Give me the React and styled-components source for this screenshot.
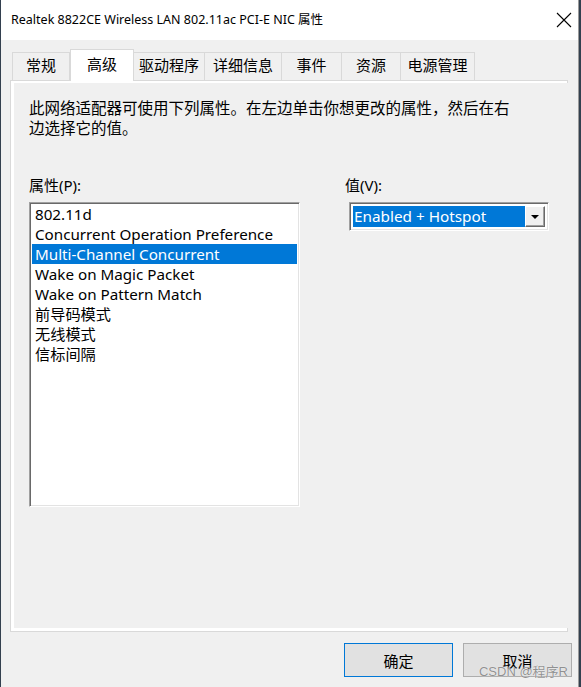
import React from 'react';
import styled, { createGlobalStyle } from 'styled-components';

const GlobalStyle = createGlobalStyle`
  html, body {
    margin: 0;
    padding: 0;
    background: #33404f;
  }
  body {
    font-family: "Noto Sans", "Noto Sans CJK SC", sans-serif;
    color: #000;
  }
`;

const Window = styled.div`
  width: 577px;
  height: 687px;
  margin-left: 1px;
  background: #f0f0f0;
  border-right: 1px solid #9a9a9a;
  display: flex;
  flex-direction: column;
  position: relative;
  overflow: hidden;
`;

const TitleBar = styled.div`
  height: 40px;
  background: #fff;
  display: flex;
  align-items: center;
  justify-content: space-between;
  padding: 0 6px 0 10px;
  box-sizing: border-box;
`;

const Title = styled.div`
  font-size: 12.5px;
  line-height: 16px;
  white-space: nowrap;
  margin-top: -1px;
`;

const CloseIcon = styled.svg`
  width: 16px;
  height: 16px;
`;

const Body = styled.div`
  flex: 1;
  display: flex;
  flex-direction: column;
  padding: 9px 10px 0 9px;
`;

const TabRow = styled.div`
  display: flex;
  align-items: flex-end;
  height: 32px;
  padding-left: 2px;
  position: relative;
  z-index: 1;
  margin-bottom: -1px;
`;

const Tab = styled.div`
  width: ${(p) => p.w}px;
  height: ${(p) => (p.active ? 32 : 29)}px;
  box-sizing: border-box;
  background: ${(p) => (p.active ? '#fff' : '#f0f0f0')};
  border: 1px solid #d9d9d9;
  border-bottom: ${(p) => (p.active ? 'none' : '1px solid #d9d9d9')};
  border-left: ${(p) => (p.first || p.active ? '1px solid #d9d9d9' : 'none')};
  display: flex;
  align-items: center;
  justify-content: center;
  padding-bottom: ${(p) => (p.active ? 4 : 3)}px;
  font-size: 15px;
  line-height: 20px;
  color: #000;
`;

const Panel = styled.div`
  height: 552px;
  box-sizing: border-box;
  border: 1px solid #d9d9d9;
  background: #fff;
  padding: 2px 3px 3px 3px;
  display: flex;
`;

const Page = styled.div`
  flex: 1;
  background: #f0f0f0;
  padding: 15px 16px 0 15px;
  display: flex;
  flex-direction: column;
`;

const Description = styled.p`
  margin: 0;
  font-size: 15.5px;
  line-height: 20px;
  width: 486px;
`;

const Columns = styled.div`
  display: flex;
  margin-top: 37px;
`;

const Column = styled.div`
  display: flex;
  flex-direction: column;
  width: ${(p) => p.w}px;
  margin-left: ${(p) => p.offset || 0}px;
`;

const Label = styled.div`
  font-size: 15px;
  line-height: 20px;
  height: 20px;
  margin-bottom: 7px;
`;

const ListBox = styled.div`
  height: 305px;
  box-sizing: border-box;
  background: #fff;
  border: 1px solid;
  border-color: #a0a0a0 #fff #fff #a0a0a0;
  box-shadow: inset 1px 1px 0 #696969, inset -1px -1px 0 #e3e3e3;
  padding: 1px 2px;
`;

const ListItem = styled.div`
  height: 20px;
  line-height: 20px;
  font-size: 15.2px;
  padding-left: 3px;
  white-space: nowrap;
  background: ${(p) => (p.selected ? '#0078d7' : 'transparent')};
  color: ${(p) => (p.selected ? '#fff' : '#000')};
`;

const Combo = styled.div`
  margin-left: 4px;
  width: 200px;
  height: 29px;
  box-sizing: border-box;
  border: 1px solid;
  border-color: #a0a0a0 #fff #fff #a0a0a0;
  box-shadow: inset 1px 1px 0 #696969, inset -1px -1px 0 #e3e3e3;
  background: #fff;
  padding: 3px 3px 3px 3px;
  display: flex;
`;

const ComboValue = styled.div`
  flex: 1;
  background: #0078d7;
  color: #fff;
  font-size: 15.3px;
  line-height: 21px;
  padding-left: 1px;
  white-space: nowrap;
`;

const ComboButton = styled.div`
  width: 20px;
  box-sizing: border-box;
  background: #f0f0f0;
  border: 1px solid;
  border-color: #fff #696969 #696969 #fff;
  box-shadow: inset -1px -1px 0 #a0a0a0;
  display: flex;
  align-items: center;
  justify-content: center;
`;

const Arrow = styled.div`
  width: 0;
  height: 0;
  border-left: 4px solid transparent;
  border-right: 4px solid transparent;
  border-top: 4px solid #000;
  margin-top: 1px;
`;

const ButtonRow = styled.div`
  display: flex;
  justify-content: flex-end;
  gap: 10px;
  margin-top: 11px;
  margin-right: -4px;
`;

const Button = styled.button`
  width: 109px;
  height: 34px;
  box-sizing: border-box;
  background: #e1e1e1;
  border: 1px solid ${(p) => (p.primary ? '#0078d7' : '#adadad')};
  font-family: "Noto Sans", "Noto Sans CJK SC", sans-serif;
  font-size: 15px;
  color: #000;
  padding: 0;
`;

const Watermark = styled.div`
  position: absolute;
  right: 10px;
  bottom: 7px;
  font-family: "Liberation Sans", "Noto Sans CJK SC", sans-serif;
  font-size: 13px;
  color: rgba(110, 110, 110, 0.75);
  text-shadow: 0 0 1px #fff;
  pointer-events: none;
`;

const tabs = [
  { label: '常规', w: 58 },
  { label: '高级', w: 64, active: true },
  { label: '驱动程序', w: 71 },
  { label: '详细信息', w: 77 },
  { label: '事件', w: 60 },
  { label: '资源', w: 59 },
  { label: '电源管理', w: 74 },
];

const items = [
  '802.11d',
  'Concurrent Operation Preference',
  'Multi-Channel Concurrent',
  'Wake on Magic Packet',
  'Wake on Pattern Match',
  '前导码模式',
  '无线模式',
  '信标间隔',
];

const App = () => {
  return (
    <>
      <GlobalStyle />
      <Window>
        <TitleBar>
          <Title>Realtek 8822CE Wireless LAN 802.11ac PCI-E NIC 属性</Title>
          <CloseIcon viewBox="0 0 16 16">
            <path d="M1 1 L15 15 M15 1 L1 15" stroke="#000" strokeWidth="1.1" fill="none" />
          </CloseIcon>
        </TitleBar>
        <Body>
          <TabRow>
            {tabs.map((t, i) => (
              <Tab key={t.label} w={t.w} active={t.active} first={i === 0}>
                {t.label}
              </Tab>
            ))}
          </TabRow>
          <Panel>
            <Page>
              <Description>
                此网络适配器可使用下列属性。在左边单击你想更改的属性，然后在右边选择它的值。
              </Description>
              <Columns>
                <Column w={271}>
                  <Label>属性(P):</Label>
                  <ListBox>
                    {items.map((item) => (
                      <ListItem key={item} selected={item === 'Multi-Channel Concurrent'}>
                        {item}
                      </ListItem>
                    ))}
                  </ListBox>
                </Column>
                <Column w={210} offset={45}>
                  <Label>值(V):</Label>
                  <Combo>
                    <ComboValue>Enabled + Hotspot</ComboValue>
                    <ComboButton>
                      <Arrow />
                    </ComboButton>
                  </Combo>
                </Column>
              </Columns>
            </Page>
          </Panel>
          <ButtonRow>
            <Button primary>确定</Button>
            <Button>取消</Button>
          </ButtonRow>
        </Body>
        <Watermark>CSDN @程序R</Watermark>
      </Window>
    </>
  );
};

export default App;
